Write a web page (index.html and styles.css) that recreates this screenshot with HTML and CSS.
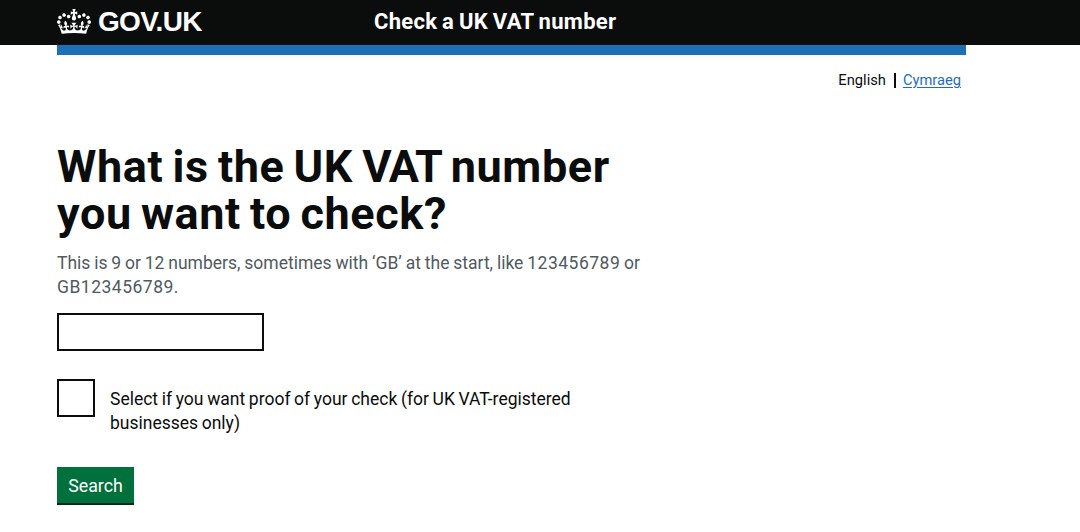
FILE: index.html
```html
<!DOCTYPE html>
<html lang="en">
<head>
    <meta charset="UTF-8">
    <meta name="viewport" content="width=device-width, initial-scale=1.0">
    <title>Check a UK VAT number</title>
    <link rel="stylesheet" href="styles.css">
</head>
<body>
    <!-- Header -->
    <header class="header">
        <div class="header-container">
            <a href="#" class="logo">
                <svg class="crown" viewBox="0 0 132 97" preserveAspectRatio="none" aria-hidden="true">
                    <path fill="currentColor" fill-rule="evenodd" d="M25 30.2c3.5 1.5 7.7-.2 9.1-3.7 1.5-3.6-.2-7.8-3.9-9.2-3.6-1.4-7.6.3-9.1 3.9-1.4 3.5.3 7.5 3.9 9zM9 39.5c3.6 1.5 7.8-.2 9.2-3.7 1.5-3.6-.2-7.8-3.9-9.1-3.6-1.5-7.6.2-9.1 3.8-1.4 3.5.3 7.5 3.8 9zM4.4 57.2c3.5 1.5 7.7-.2 9.1-3.8 1.5-3.6-.2-7.7-3.9-9.1-3.5-1.5-7.6.3-9.1 3.8-1.4 3.5.3 7.6 3.9 9.1zm38.3-21.4c3.5 1.5 7.7-.2 9.1-3.8 1.5-3.6-.2-7.7-3.9-9.1-3.6-1.5-7.6.3-9.1 3.8-1.3 3.6.4 7.7 3.9 9.1zm64.4-5.6c-3.6 1.5-7.8-.2-9.1-3.7-1.5-3.6.2-7.8 3.8-9.2 3.6-1.4 7.7.3 9.2 3.9 1.3 3.5-.4 7.5-3.9 9zm15.9 9.3c-3.6 1.5-7.7-.2-9.1-3.7-1.5-3.6.2-7.8 3.7-9.1 3.6-1.5 7.7.2 9.2 3.8 1.5 3.5-.3 7.5-3.8 9zm4.7 17.7c-3.6 1.5-7.8-.2-9.2-3.8-1.5-3.6.2-7.7 3.9-9.1 3.6-1.5 7.7.3 9.2 3.8 1.3 3.5-.4 7.6-3.9 9.1zM89.3 35.8c-3.6 1.5-7.8-.2-9.2-3.8-1.4-3.6.2-7.7 3.9-9.1 3.6-1.5 7.7.3 9.2 3.8 1.4 3.6-.3 7.7-3.9 9.1zM69.7 17.7l8.9 4.7V9.3l-8.9 2.8c-.2-.3-.5-.6-.9-.9L72.4 0H59.6l3.5 11.2c-.3.3-.6.5-.9.9l-8.8-2.8v13.1l8.8-4.7c.3.3.6.7.9.9l-5 15.4v.1c-.2.8-.4 1.6-.4 2.4 0 4.1 3.1 7.5 7 8.1h.2c.3 0 .7.1 1 .1.4 0 .7 0 1-.1h.2c4-.6 7.1-4.1 7.1-8.1 0-.8-.1-1.7-.4-2.4V34l-5.1-15.4c.4-.2.7-.6 1-.9zM66 92.8c16.9 0 32.8 1.1 47.1 3.2 4-16.9 8.9-26.7 14-33.5l-9.6-3.4c1 4.9 1.1 7.2 0 10.2-1.5-1.4-3-4.3-4.2-8.7L108.6 76c2.8-2 5-3.2 7.5-3.3-4.4 9.4-10 11.9-13.6 11.2-4.3-.8-6.3-4.6-5.6-7.9 1-4.7 5.7-5.9 8-.5 4.3-8.7-3-11.4-7.6-8.8 7.1-7.2 7.9-13.5 2.1-21.1-8 6.1-8.1 12.3-4.5 20.8-4.7-5.4-12.1-2.5-9.5 6.2 3.4-5.2 7.9-2 7.2 3.1-.6 4.3-6.4 7.8-13.5 7.2-10.3-.9-10.9-8-11.2-13.8 2.5-.5 7.1 1.8 11 7.3L80.2 60c-4.1 4.4-8 5.3-12.3 5.4 1.4-4.4 8-11.6 8-11.6H55.5s6.4 7.2 7.9 11.6c-4.2-.1-8-1-12.3-5.4l1.4 16.4c3.9-5.5 8.5-7.7 10.9-7.3-.3 5.8-.9 12.8-11.1 13.8-7.2.6-12.9-2.9-13.5-7.2-.7-5 3.8-8.3 7.1-3.1 2.7-8.7-4.6-11.6-9.4-6.2 3.7-8.5 3.6-14.7-4.6-20.8-5.8 7.6-5 13.9 2.2 21.1-4.7-2.6-11.9.1-7.7 8.8 2.3-5.5 7.1-4.2 8.1.5.7 3.3-1.3 7.1-5.7 7.9-3.5.7-9-1.8-13.5-11.2 2.5.1 4.7 1.3 7.5 3.3l-4.7-15.4c-1.2 4.4-2.7 7.2-4.3 8.7-1.1-3-.9-5.3 0-10.2l-9.5 3.4c5 6.9 9.9 16.7 14 33.5 14.8-2.1 30.8-3.2 47.7-3.2z"/>
                </svg>
                <span class="logo-text">GOV.UK</span>
            </a>
            <a href="#" class="service-name">Check a UK VAT number</a>
        </div>
    </header>

    <div class="container">
        <div class="blue-bar"></div>

        <!-- Language switch -->
        <nav class="language">
            <span class="language-current">English</span>
            <a href="#" class="language-link">Cymraeg</a>
        </nav>

        <!-- Form -->
        <form class="form">
            <h1 class="heading"><label for="target">What is the UK <span class="tight">VAT</span> number<br>you want to check?</label></h1>
            <p class="hint">This is 9 or 12 numbers, sometimes with ‘GB’ at the start, like <span class="digits">123456789</span> or<br><span class="digits">GB123456789.</span></p>
            <input class="input" id="target" type="text">

            <div class="checkbox-item">
                <input class="checkbox" id="proof" type="checkbox">
                <label class="checkbox-label" for="proof">Select if you want proof of your check (for UK VAT-registered<br>businesses only)</label>
            </div>

            <button class="button" type="button">Search</button>
        </form>
    </div>
</body>
</html>
```
FILE: styles.css
```css
*, *::before, *::after {
    box-sizing: border-box;
    margin: 0;
    padding: 0;
}

body {
    font-family: Roboto, "Liberation Sans", sans-serif;
    background-color: #fff;
    color: #0b0c0c;
}

/* Header */
.header {
    height: 45px;
    background-color: #0b0c0c;
}

.header-container {
    display: flex;
    align-items: center;
    height: 43px;
    padding-left: 57px;
}

.logo {
    display: flex;
    align-items: center;
    width: 317px;
    color: #fff;
    text-decoration: none;
}

.crown {
    width: 34px;
    height: 25px;
    margin-top: -1px;
}

.logo-text {
    margin-left: 7px;
    font-family: "Liberation Sans", Arial, sans-serif;
    font-size: 28px;
    font-weight: 700;
    line-height: 30px;
    letter-spacing: -0.7px;
}

.service-name {
    color: #fff;
    font-size: 22px;
    font-weight: 700;
    line-height: 30px;
    letter-spacing: 0.3px;
    word-spacing: -1px;
    text-decoration: none;
}

/* Page width */
.container {
    width: 909px;
    margin-left: 57px;
}

.blue-bar {
    height: 10px;
    background-color: #1d70b8;
}

/* Language switch */
.language {
    display: flex;
    justify-content: flex-end;
    padding: 16px 5px 1px 0;
    font-size: 14.7px;
    line-height: 18px;
}

.language-current {
    padding-right: 8px;
}

.language-link {
    position: relative;
    padding-left: 9px;
    color: #1d70b8;
    text-underline-offset: 2px;
}

.language-link::before {
    content: "";
    position: absolute;
    top: 2px;
    left: 0;
    width: 2px;
    height: 15px;
    background-color: #0b0c0c;
}

/* Form */
.form {
    padding-top: 53px;
}

.heading {
    font-size: 45px;
    font-weight: 700;
    line-height: 47px;
    letter-spacing: 0.6px;
    word-spacing: -2.6px;
}

.tight {
    letter-spacing: -1.3px;
}

.hint {
    margin-top: 15px;
    color: #505a5f;
    font-size: 17.5px;
    line-height: 23.5px;
    word-spacing: -0.5px;
}

.digits {
    letter-spacing: 0.5px;
}

.input {
    display: block;
    width: 207px;
    height: 38px;
    margin-top: 14px;
    border: 2px solid #0b0c0c;
}

.checkbox-item {
    display: flex;
    margin-top: 28px;
}

.checkbox {
    width: 38px;
    height: 38px;
    border: 2px solid #0b0c0c;
    appearance: none;
}

.checkbox-label {
    padding: 8px 0 0 15px;
    font-size: 17.5px;
    line-height: 24px;
    word-spacing: -0.7px;
}

.button {
    display: block;
    width: 77px;
    height: 38px;
    margin-top: 32px;
    border: none;
    background-color: #00703c;
    box-shadow: inset 0 -2px 0 #002d18;
    color: #fff;
    font-family: inherit;
    font-size: 17.8px;
    line-height: 36px;
}
```
